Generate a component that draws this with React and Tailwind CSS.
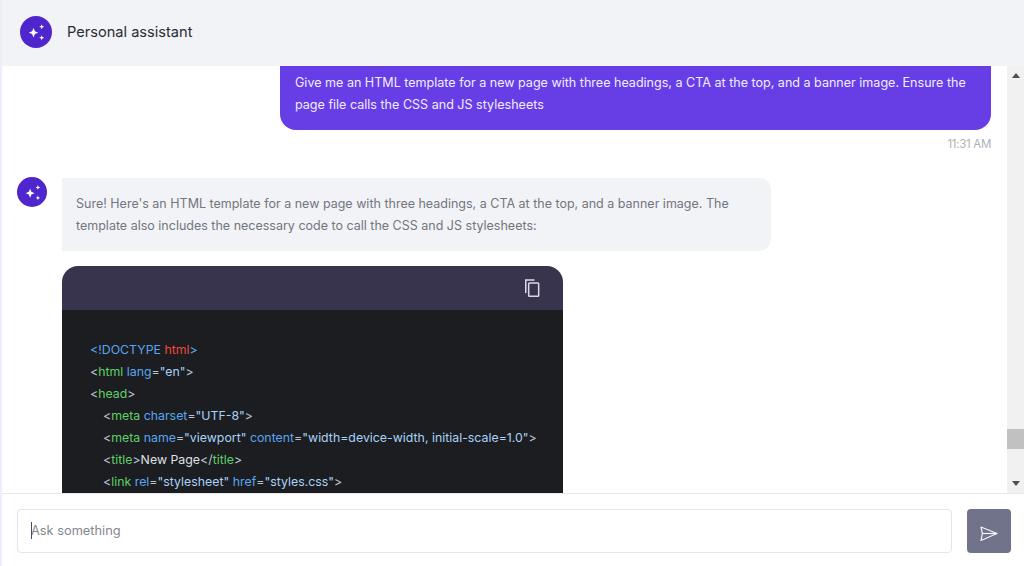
const B = "text-[#5aa5f0]", G = "text-[#5fd068]", V = "text-[#a9d3fa]", P = "text-[#b7c4d2]", W = "text-[#dfe1e6]", R = "text-[#f0483e]";

const lines = [
  { i: 0, p: [[B, "<!DOCTYPE "], [R, "html"], [B, ">"]] },
  { i: 0, p: [[P, "<"], [G, "html "], [B, "lang"], [P, "="], [V, "\"en\""], [P, ">"]] },
  { i: 0, p: [[P, "<"], [G, "head"], [P, ">"]] },
  { i: 1, p: [[P, "<"], [G, "meta "], [B, "charset"], [P, "="], [V, "\"UTF-8\""], [P, ">"]] },
  { i: 1, p: [[P, "<"], [G, "meta "], [B, "name"], [P, "="], [V, "\"viewport\" "], [B, "content"], [P, "="], [V, "\"width=device-width, initial-scale=1.0\""], [P, ">"]] },
  { i: 1, p: [[P, "<"], [G, "title"], [P, ">"], [W, "New Page"], [P, "</"], [G, "title"], [P, ">"]] },
  { i: 1, p: [[P, "<"], [G, "link "], [B, "rel"], [P, "="], [V, "\"stylesheet\" "], [B, "href"], [P, "="], [V, "\"styles.css\""], [P, ">"]] },
];

function Sparkles({ size }) {
  return (
    <svg width={size} height={size} viewBox="0 0 20 20" fill="#fff">
      <path d="M7.5 6 L8.9 9.3 L12.2 10.7 L8.9 12.1 L7.5 15.4 L6.1 12.1 L2.8 10.7 L6.1 9.3 Z" />
      <path d="M15.7 2.2 L16.4 4 L18.2 4.7 L16.4 5.4 L15.7 7.2 L15 5.4 L13.2 4.7 L15 4 Z" />
      <path d="M15.7 13.2 L16.4 15 L18.2 15.7 L16.4 16.4 L15.7 18.2 L15 16.4 L13.2 15.7 L15 15 Z" />
    </svg>
  );
}

export default function App() {
  return (
    <div className="h-[566px] w-full flex flex-col overflow-hidden bg-white border-l-2 border-[#eeeef8] font-['Inter',sans-serif]">
      <header className="h-[66px] shrink-0 bg-[#f2f3f6] flex items-center gap-[15px] pl-[18px] pb-[2px] z-10">
        <div className="w-8 h-8 rounded-full bg-[#4f25cd] flex items-center justify-center">
          <Sparkles size={20} />
        </div>
        <span className="text-[14.6px] text-[#2b2c33] pt-[2px]">Personal assistant</span>
      </header>

      <div className="flex-1 min-h-0 flex">
        <main className="flex-1 min-w-0 overflow-hidden">
          <div className="ml-[278px] mr-[16px] h-[64px] bg-[#673de6] rounded-b-2xl px-[15px] pt-[6px] text-[12.55px] leading-[22px] text-[#f1edff]">
            Give me an HTML template for a new page with three headings, a CTA at the top, and a banner image. Ensure the page file calls the CSS and JS stylesheets
          </div>
          <div className="mr-[16px] mt-[6px] text-right text-[11.5px] leading-[16px] tracking-[-0.3px] text-[#b0b1b8]">11:31 AM</div>

          <div className="flex mt-[26px] pl-[15px]">
            <div className="w-[30px] h-[30px] mt-[-1px] rounded-full bg-[#4f25cd] flex items-center justify-center shrink-0">
              <Sparkles size={19} />
            </div>
            <div className="ml-[15px] flex flex-col">
              <div className="w-[709px] h-[73px] bg-[#f2f3f6] rounded-r-xl px-[14px] pt-[15px] text-[12.5px] leading-[22px] text-[#73757f]">
                Sure! Here's an HTML template for a new page with three headings, a CTA at the top, and a banner image. The template also includes the necessary code to call the CSS and JS stylesheets:
              </div>
              <div className="w-[501px] mt-[15px] rounded-t-2xl overflow-hidden">
                <div className="h-[44px] bg-[#38344e] flex items-center justify-end pr-[21px]">
                  <svg width="20" height="20" viewBox="0 0 24 24" fill="none" stroke="#dcd8ec" strokeWidth="1.8">
                    <path d="M4.5 18 V2.5 H15" />
                    <rect x="8" y="6" width="12" height="16" rx="1" />
                  </svg>
                </div>
                <div className="bg-[#1c1d20] pt-[29px] pb-[20px] pl-[28px] text-[12.35px] leading-[22px] whitespace-pre">
                  {lines.map((l, n) => (
                    <div key={n} className={l.i ? "pl-[13px]" : ""}>
                      {l.p.map(([c, t], k) => <span key={k} className={c}>{t}</span>)}
                    </div>
                  ))}
                </div>
              </div>
            </div>
          </div>
        </main>

        <div className="w-[17px] shrink-0 bg-[#f1f1f1] flex flex-col items-center justify-between relative">
          <div className="mt-[7px] w-0 h-0 border-x-[4px] border-x-transparent border-b-[5px] border-b-[#505050]" />
          <div className="absolute top-[363px] left-0 w-full h-[20px] bg-[#c1c1c1]" />
          <div className="mb-[7px] w-0 h-0 border-x-[4px] border-x-transparent border-t-[5px] border-t-[#505050]" />
        </div>
      </div>

      <footer className="h-[73px] shrink-0 border-t border-[#e8e8ec] bg-white flex gap-[15px] pl-[15px] pr-[13px] pt-[15px] z-10">
        <div className="flex-1 h-[44px] border border-[#e4e4ee] rounded flex items-center pl-[13px] text-[12.8px] text-[#85868f] relative">
          <span className="absolute left-[13px] top-[12px] w-[1px] h-[17px] bg-[#4a4a68]" />
          Ask something
        </div>
        <button className="w-[44px] h-[44px] rounded bg-[#71738a] flex items-center justify-center pt-[5px]">
          <svg width="20" height="16" viewBox="0 0 20 16" fill="none" stroke="#f4f4f8" strokeWidth="1.2" strokeLinejoin="round">
            <path d="M2 1 L18 7.5 L2 14.5 L3.4 7.5 Z" />
            <path d="M3.4 7.5 H18" />
          </svg>
        </button>
      </footer>
    </div>
  );
}
